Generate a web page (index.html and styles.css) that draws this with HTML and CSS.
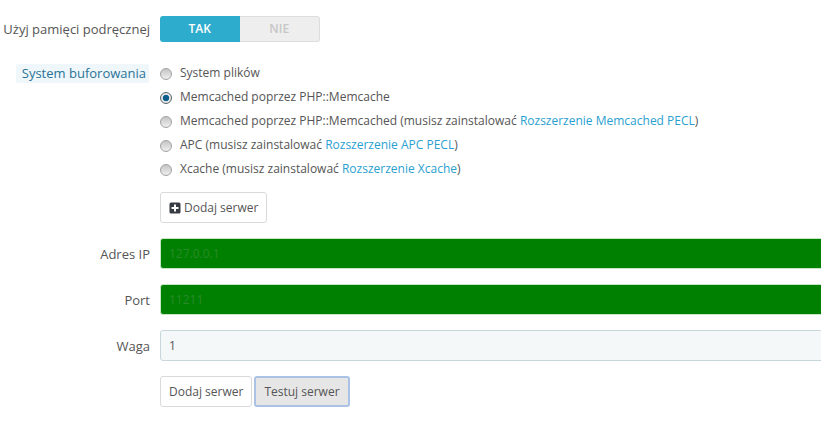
FILE: index.html
```html
<!DOCTYPE html>
<html lang="pl">
<head>
    <meta charset="UTF-8">
    <meta name="viewport" content="width=device-width, initial-scale=1.0">
    <title>Pamięć podręczna</title>
    <link rel="stylesheet" href="styles.css">
</head>
<body>

    <form class="form">
        <div class="row row-switch">
            <label class="label">Użyj pamięci podręcznej</label>
            <div class="switch">
                <span class="switch-on">TAK</span>
                <span class="switch-off">NIE</span>
            </div>
        </div>

        <div class="row row-cache">
            <label class="label"><span class="label-hint">System buforowania</span></label>
            <div class="options">
                <label class="option"><input type="radio" name="cache"> System plików</label>
                <label class="option"><input type="radio" name="cache" checked> Memcached poprzez PHP::Memcache</label>
                <label class="option"><input type="radio" name="cache"> Memcached poprzez PHP::Memcached (musisz zainstalować&nbsp;<a href="#">Rozszerzenie Memcached PECL</a>)</label>
                <label class="option"><input type="radio" name="cache"> APC (musisz zainstalować&nbsp;<a href="#">Rozszerzenie APC PECL</a>)</label>
                <label class="option"><input type="radio" name="cache"> Xcache (musisz zainstalować&nbsp;<a href="#">Rozszerzenie Xcache</a>)</label>
            </div>
        </div>

        <div class="row row-add">
            <span class="label"></span>
            <button type="button" class="btn">
                <svg class="icon" viewBox="0 0 12 12" width="12" height="12"><path fill="#363a41" fill-rule="evenodd" d="M2 0.5h8a1.5 1.5 0 0 1 1.5 1.5v8a1.5 1.5 0 0 1-1.5 1.5H2A1.5 1.5 0 0 1 0.5 10V2A1.5 1.5 0 0 1 2 0.5zM5 2.5v2.5H2.5v2H5v2.5h2V7h2.5V5H7V2.5z"/></svg>
                Dodaj serwer
            </button>
        </div>

        <div class="row row-field">
            <label class="label">Adres IP</label>
            <input class="input input-ok" type="text" value="127.0.0.1">
        </div>
        <div class="row row-field">
            <label class="label">Port</label>
            <input class="input input-ok" type="text" value="11211">
        </div>
        <div class="row row-field">
            <label class="label">Waga</label>
            <input class="input" type="text" value="1">
        </div>

        <div class="row row-actions">
            <span class="label"></span>
            <div class="actions">
                <button type="button" class="btn">Dodaj serwer</button>
                <button type="button" class="btn btn-active">Testuj serwer</button>
            </div>
        </div>
    </form>

</body>
</html>
```

FILE: styles.css
```css
html, body {
    margin: 0;
    height: 421px;
    overflow: hidden;
}
body {
    font-family: "Open Sans", "Liberation Sans", sans-serif;
    font-size: 12px;
    color: #555;
    background: #fff;
}
.form {
    padding-top: 16px;
    width: 840px;
}
.row {
    display: flex;
    align-items: center;
    gap: 10px;
}
.label {
    width: 150px;
    flex: none;
    text-align: right;
    white-space: nowrap;
    font-size: 13px;
}
.row-cache {
    align-items: flex-start;
    margin-top: 22px;
}
.label-hint {
    display: inline-block;
    margin-right: 1px;
    padding: 0 3px 0 6px;
    line-height: 19px;
    background: #eff7fb;
    border-radius: 2px;
    color: #2b7396;
}
.switch {
    display: flex;
    width: 160px;
    height: 26px;
    font-weight: 600;
    line-height: 25px;
    text-align: center;
}
.switch-on {
    flex: 1;
    background: #2eacce;
    color: #fff;
    border-radius: 3px 0 0 3px;
}
.switch-off {
    flex: 1;
    background: #eee;
    color: #c7c7c7;
    border: 1px solid #ddd;
    border-left: none;
    border-radius: 0 3px 3px 0;
    line-height: 24px;
}
.options {
    display: flex;
    flex-direction: column;
    margin-top: -4px;
}
.option {
    display: flex;
    align-items: center;
    height: 24px;
    white-space: nowrap;
}
.option input {
    appearance: none;
    width: 12px;
    height: 12px;
    margin: 3px 8px 0 0;
    border: 1px solid #a2a2a2;
    border-radius: 50%;
    background: linear-gradient(#c4c4c4, #efefef);
    box-sizing: border-box;
}
.option input:checked {
    border-color: #59666f;
    background: radial-gradient(circle, #0c5f8d 0 2.8px, #e6e6e6 3.6px);
}
.option a {
    color: #2a9fd0;
    text-decoration: none;
}
.row-add {
    margin-top: 12px;
}
.btn {
    display: inline-flex;
    align-items: center;
    gap: 3px;
    height: 31px;
    padding: 0 8px;
    font: inherit;
    color: #555;
    background: #fff;
    border: 1px solid #dadada;
    border-radius: 3px;
}
.row-field {
    margin-top: 15px;
}
.label + .input {
    flex: 1;
}
.input {
    height: 31px;
    min-width: 0;
    box-sizing: border-box;
    padding: 0 8px;
    font: inherit;
    color: #555;
    background: #f5f8f9;
    border: 1px solid #c7d6db;
    border-radius: 3px;
}
.input-ok {
    background: #008000;
    border-color: #c5e6c5;
    color: #2a8a2a;
}
.row-actions {
    margin-top: 15px;
}
.actions {
    display: flex;
    gap: 2px;
}
.btn-active {
    background: #e6e6e6;
    border: 2px solid #a9c2e6;
    padding: 0 8px;
}
```
